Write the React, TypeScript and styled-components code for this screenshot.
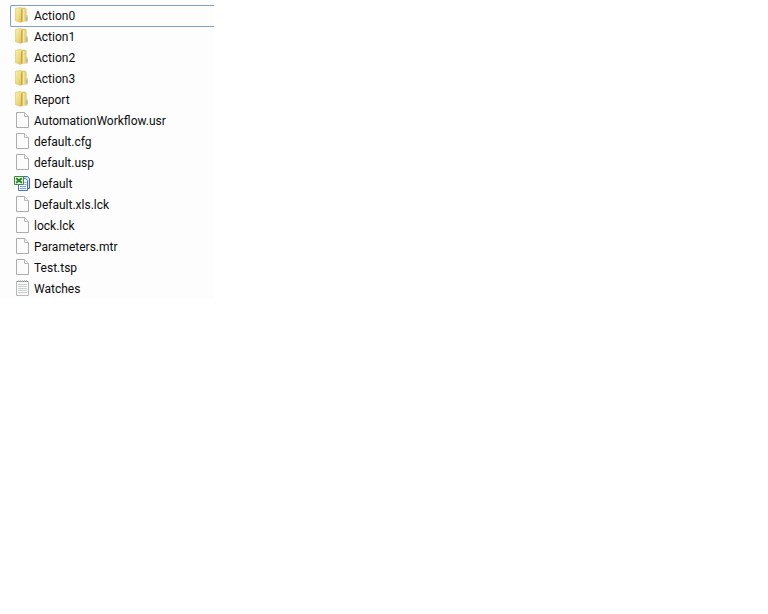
import React, { useState } from "react";
import styled, { createGlobalStyle } from "styled-components";

type Kind = "folder" | "file" | "excel" | "text";

const entries: { name: string; kind: Kind }[] = [
  { name: "Action0", kind: "folder" },
  { name: "Action1", kind: "folder" },
  { name: "Action2", kind: "folder" },
  { name: "Action3", kind: "folder" },
  { name: "Report", kind: "folder" },
  { name: "AutomationWorkflow.usr", kind: "file" },
  { name: "default.cfg", kind: "file" },
  { name: "default.usp", kind: "file" },
  { name: "Default", kind: "excel" },
  { name: "Default.xls.lck", kind: "file" },
  { name: "lock.lck", kind: "file" },
  { name: "Parameters.mtr", kind: "file" },
  { name: "Test.tsp", kind: "file" },
  { name: "Watches", kind: "text" },
];

const GlobalStyle = createGlobalStyle`
  body {
    margin: 0;
    background: #ffffff;
  }
`;

const FileList = styled.ul`
  box-sizing: border-box;
  width: 27.9%;
  min-width: 180px;
  margin: 0;
  padding: 5px 0 0 10px;
  list-style: none;
  background: #fdfdfd;
`;

const FileItem = styled.li`
  height: 21px;
`;

const FileButton = styled.button<{ $selected: boolean }>`
  box-sizing: border-box;
  display: flex;
  align-items: center;
  gap: 4px;
  width: 100%;
  height: 22px;
  padding: 0 0 0 3px;
  border: 1px solid ${(p) => (p.$selected ? "#7f9fc8" : "transparent")};
  border-right: 0;
  border-radius: 2px 0 0 2px;
  background: transparent;
  color: #0c0c0c;
  font-family: Roboto, "Open Sans", sans-serif;
  font-size: 12px;
  line-height: 20px;
  text-align: left;
  white-space: nowrap;
`;

const Icon = styled.svg`
  display: block;
  flex: none;
  width: 16px;
  height: 16px;
  margin-bottom: 2px;
`;

function FolderIcon() {
  return (
    <Icon viewBox="0 0 16 16" aria-hidden="true">
      <defs>
        <linearGradient id="folderFront" x1="0" x2="1" y1="0" y2="1">
          <stop offset="0" stopColor="#f8eeb0" />
          <stop offset="0.55" stopColor="#edda82" />
          <stop offset="1" stopColor="#dcb94e" />
        </linearGradient>
        <linearGradient id="folderBack" x1="0" x2="1">
          <stop offset="0" stopColor="#d8b64c" />
          <stop offset="1" stopColor="#ecd98a" />
        </linearGradient>
      </defs>
      <path d="M6 1h5.5l.8 1v5.5l1 1v5.8H6z" fill="url(#folderBack)" stroke="#d9c16c" strokeWidth=".5" />
      <path d="M8.8 2h1.6v12H8.8z" fill="#f4e8ae" />
      <path d="M11 8.5l2.2-.5v6H11z" fill="#dccb88" />
      <path d="M12.4 10h1v3h-1z" fill="#93b3b4" />
      <path d="M1.5 1.3L6.5.5l1.7 1.3v12.4L7 15.5l-5.5-1.7z" fill="url(#folderFront)" stroke="#dcc268" strokeWidth=".6" />
      <path d="M7.2 2.8l1-.8v12.2l-1 .9z" fill="#c9a038" />
    </Icon>
  );
}

function PageIcon() {
  return (
    <Icon viewBox="0 0 16 16" aria-hidden="true">
      <path d="M2.5.5h8l4 4v11h-12z" fill="#fcfcfc" stroke="#adadad" />
      <path d="M10.5.5v4h4" fill="#f2f2f2" stroke="#b8b8b8" />
    </Icon>
  );
}

function ExcelIcon() {
  return (
    <Icon viewBox="0 0 16 16" aria-hidden="true">
      <path d="M7.5 1.5h6l2 2v10h-8z" fill="#cfdef5" stroke="#4468aa" />
      <path d="M4.5 3.5h7l2 2v10h-9z" fill="#f1f6ff" stroke="#4f73b3" />
      <path d="M10.5 7.5h2M10.5 9.5h2M6 11.5h6M6 13.5h6" stroke="#84a2d6" fill="none" />
      <path d="M.5 1.5h9v8h-9z" fill="#e3f1dc" stroke="#3f8c3b" />
      <path d="M2.2 3.2l5.6 4.6M7.8 3.2L2.2 7.8" stroke="#2c7d2c" strokeWidth="1.8" fill="none" />
    </Icon>
  );
}

function NotepadIcon() {
  return (
    <Icon viewBox="0 0 16 16" aria-hidden="true">
      <path d="M2.5 1.5h12v14h-12z" fill="#f8f9f9" stroke="#b4b9ba" />
      <path d="M3 1.5h11" stroke="#7e8486" strokeDasharray="1 1" />
      <path d="M4 .5h10" stroke="#bfc4c5" strokeDasharray="1 1" />
      <path d="M4 4.5h9M4 6.5h9M4 8.5h9M4 10.5h9M4 12.5h9" stroke="#cbd0d1" />
    </Icon>
  );
}

const icons: Record<Kind, () => React.JSX.Element> = {
  folder: FolderIcon,
  file: PageIcon,
  excel: ExcelIcon,
  text: NotepadIcon,
};

export default function App() {
  const [selected, setSelected] = useState(entries[0].name);
  return (
    <>
      <GlobalStyle />
      <FileList aria-label="Files">
        {entries.map(({ name, kind }) => {
          const KindIcon = icons[kind];
          return (
            <FileItem key={name}>
              <FileButton
                type="button"
                $selected={name === selected}
                aria-pressed={name === selected}
                onClick={() => setSelected(name)}
              >
                <KindIcon />
                <span>{name}</span>
              </FileButton>
            </FileItem>
          );
        })}
      </FileList>
    </>
  );
}
